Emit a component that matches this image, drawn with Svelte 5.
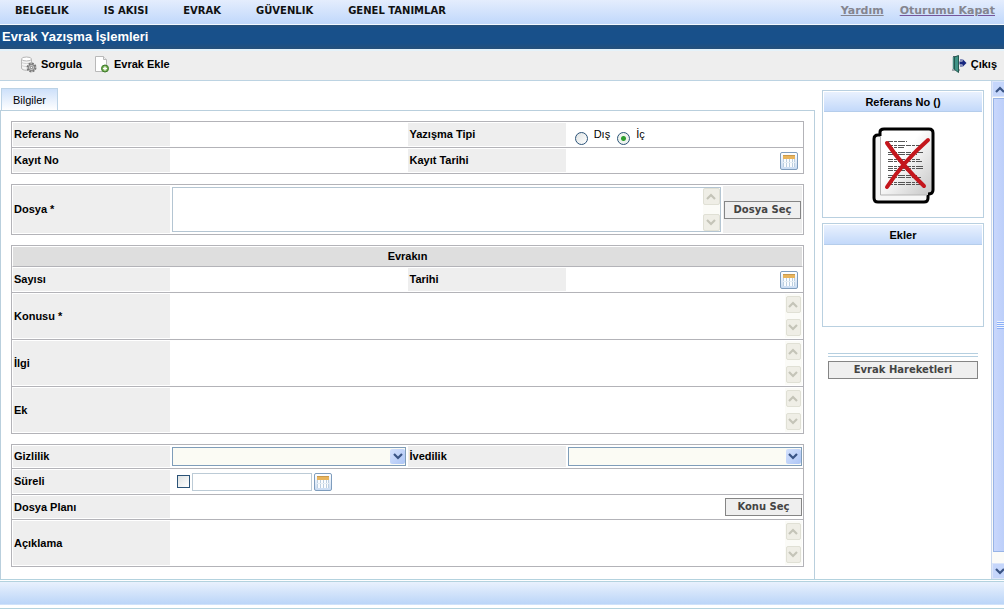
<script>
  const menu = ["BELGELIK", "IS AKISI", "EVRAK", "GÜVENLIK", "GENEL TANIMLAR"];

  let tip = $state("ic");
  let sureli = $state(false);
</script>

{#snippet chevron(up)}
  <svg class="chevron" viewBox="0 0 10 7" width="10" height="7">
    <path d={up ? "M1 6L5 2L9 6" : "M1 1L5 5L9 1"} fill="none" stroke="currentColor" stroke-width="2.2" />
  </svg>
{/snippet}

{#snippet calendar(name)}
  <button class="calendar" type="button" aria-label={name}>
    <svg viewBox="0 0 16 16" width="16" height="16">
      <rect x="2" y="2" width="12" height="12" fill="#fbfdff" />
      <path d="M2.5 6v8M5.5 6v8M8.5 6v8M11.5 6v8M13.5 6v8" stroke="#bccfe0" />
      <path d="M2 9.500h12" stroke="#e6eef4" />
      <rect x="2" y="2" width="12" height="4" fill="#e8b45c" />
      <path d="M2 2.5h12" stroke="#c99a4e" />
    </svg>
  </button>
{/snippet}

{#snippet area(id)}
  <textarea {id}></textarea>
  <div class="track">
    <span class="arrow">{@render chevron(true)}</span>
    <span class="arrow">{@render chevron(false)}</span>
  </div>
{/snippet}

{#snippet dropdown(id)}
  <div class="dropdown">
    <select {id}><option value=""></option></select>
    <span class="drop">{@render chevron(false)}</span>
  </div>
{/snippet}

<div class="page">
  <nav class="menu">
    {#each menu as item}
      <a href="#menu">{item}</a>
    {/each}
    <div class="account">
      <a href="#yardim">Yardım</a>
      <a class="visited" href="#kapat">Oturumu Kapat</a>
    </div>
  </nav>

  <h1>Evrak Yazışma İşlemleri</h1>

  <div class="toolbar">
    <button type="button">
      <svg viewBox="0 0 17 17" width="17" height="17">
        <path d="M1.5 3v9c0 3 10 3 10 0V3" fill="#f4f4f4" stroke="#b5b5b5" />
        <ellipse cx="6.5" cy="3" rx="5" ry="2" fill="#fff" stroke="#b5b5b5" />
        <path d="M1.5 6c1 2 9 2 10 0M1.5 9c1 2 9 2 10 0" fill="none" stroke="#cfcfcf" />
        <circle cx="11.5" cy="11.5" r="4" fill="#ccc" stroke="#777" stroke-width="2" stroke-dasharray="2 1.1" />
        <circle cx="11.5" cy="11.5" r="3" fill="#d8d8d8" stroke="#777" />
        <circle cx="11.5" cy="11.5" r="1.2" fill="#fff" stroke="#777" />
      </svg>
      Sorgula
    </button>
    <button type="button">
      <svg viewBox="0 0 17 17" width="17" height="17">
        <path d="M2.5 0.5h8l3 3v12h-11z" fill="#fff" stroke="#b9b9b9" />
        <path d="M10.5 0.5v3h3" fill="#eee" stroke="#b9b9b9" />
        <circle cx="12" cy="12.5" r="3.5" fill="#72ad4d" stroke="#3d7a2b" />
        <path d="M12 10.5v4M10 12.5h4" stroke="#fff" stroke-width="1.4" />
      </svg>
      Evrak Ekle
    </button>
    <button class="exit" type="button">
      <svg viewBox="0 0 16 18" width="16" height="18">
        <path d="M2 1.5h6M1 15h3M7.5 2v13H9" fill="none" stroke="#55616b" />
        <path d="M2.5 2v12" stroke="#4a8c83" stroke-width="1.5" />
        <path d="M3.5 2l4-1.5v17l-4-3z" fill="#3f9487" stroke="#25584f" />
        <path d="M9 5h2M9 11h2" stroke="#1b2b86" />
        <path d="M8.5 6.5h3V4l4 4-4 4V9.500h-3z" fill="#17277f" />
      </svg>
      Çıkış
    </button>
  </div>

  <main>
    <div class="content">
      <div class="tabs">
        <button type="button">Bilgiler</button>
      </div>

      <form>
        <section>
          <div class="row">
            <label for="referans">Referans No</label>
            <div class="field"><input id="referans" type="text" /></div>
            <span class="label" id="tip">Yazışma Tipi</span>
            <div class="field radios" role="radiogroup" aria-labelledby="tip">
              <input id="dis" type="radio" name="tip" value="dis" bind:group={tip} />
              <label for="dis">Dış</label>
              <input id="ic" type="radio" name="tip" value="ic" bind:group={tip} />
              <label for="ic">İç</label>
            </div>
          </div>
          <div class="row">
            <label for="kayit">Kayıt No</label>
            <div class="field"><input id="kayit" type="text" /></div>
            <label for="kayit-tarihi">Kayıt Tarihi</label>
            <div class="field date">
              <input id="kayit-tarihi" type="text" />
              {@render calendar("Kayıt Tarihi")}
            </div>
          </div>
        </section>

        <section>
          <div class="row file">
            <label for="dosya">Dosya *</label>
            <div class="field wide">
              <div class="boxed">{@render area("dosya")}</div>
              <div class="action"><button class="push" type="button">Dosya Seç</button></div>
            </div>
          </div>
        </section>

        <section>
          <h2>Evrakın</h2>
          <div class="row">
            <label for="sayisi">Sayısı</label>
            <div class="field"><input id="sayisi" type="text" /></div>
            <label for="tarihi">Tarihi</label>
            <div class="field date">
              <input id="tarihi" type="text" />
              {@render calendar("Tarihi")}
            </div>
          </div>
          <div class="row tall">
            <label for="konusu">Konusu *</label>
            <div class="field wide">{@render area("konusu")}</div>
          </div>
          <div class="row tall">
            <label for="ilgi">İlgi</label>
            <div class="field wide">{@render area("ilgi")}</div>
          </div>
          <div class="row tall">
            <label for="ek">Ek</label>
            <div class="field wide">{@render area("ek")}</div>
          </div>
        </section>

        <section>
          <div class="row short">
            <label for="gizlilik">Gizlilik</label>
            <div class="field">{@render dropdown("gizlilik")}</div>
            <label for="ivedilik">İvedilik</label>
            <div class="field">{@render dropdown("ivedilik")}</div>
          </div>
          <div class="row">
            <label for="sureli">Süreli</label>
            <div class="field wide term">
              <input id="sureli" type="checkbox" bind:checked={sureli} />
              <input class="day" type="text" aria-label="Süreli" />
              {@render calendar("Süreli")}
            </div>
          </div>
          <div class="row plan">
            <label for="plan">Dosya Planı</label>
            <div class="field wide">
              <input id="plan" type="text" />
              <button class="push" type="button">Konu Seç</button>
            </div>
          </div>
          <div class="row tall">
            <label for="aciklama">Açıklama</label>
            <div class="field wide">{@render area("aciklama")}</div>
          </div>
        </section>
      </form>
    </div>

    <aside>
      <div class="box">
        <h3>Referans No ()</h3>
        <div class="preview">
          <svg viewBox="0 0 64 78" width="64" height="78">
            <defs>
              <linearGradient id="sheet" x1="0" y1="0" x2="1" y2="1">
                <stop offset="0.4" stop-color="#fff" />
                <stop offset="1" stop-color="#c4c4c4" />
              </linearGradient>
            </defs>
            <path d="M8 8H6Q2 8 2 12v59q0 4 4 4h46q4 0 4-4v-4" fill="#f6f6f6" stroke="#000" stroke-width="3" />
            <path d="M11 2h46q4 0 4 4v58q0 4-4 4H8V6q0-4 3-4z" fill="url(#sheet)" />
            <path d="M8 9V5q0-3 4-3h45q4 0 4 4v57q0 4-5 4" fill="none" stroke="#000" stroke-width="3" />
            <path d="M8.5 9v59H55" fill="none" stroke="#b5b5b5" />
            <path
              d="M16 14.5h19M16 18.5h33M16 20.5h16M16 25.5h35M16 27.5h29M16 32.5h32M16 34.5h34M16 39.5h35M16 41.5h35M16 43.5h20M16 48.5h29M16 50.5h33M16 55.5h31M16 57.5h35"
              stroke="#555"
              stroke-dasharray="5 1 3 1 7 1"
            />
            <path d="M15 16q15 22 37 43M56 13Q32 34 15 60" fill="none" stroke="#c4161c" stroke-width="4" stroke-linecap="round" />
          </svg>
        </div>
      </div>
      <div class="box">
        <h3>Ekler</h3>
        <div class="attachments"></div>
      </div>
      <div class="moves">
        <button class="push" type="button">Evrak Hareketleri</button>
      </div>
    </aside>

    <div class="scroll">
      <span class="scroll-arrow">{@render chevron(true)}</span>
      <span class="thumb"><i></i></span>
      <span class="scroll-arrow">{@render chevron(false)}</span>
    </div>
  </main>

  <footer></footer>
</div>

<style>
  :global(body) {
    background: #fff;
    overflow: hidden;
  }

  .page {
    font: 11px/14px "Liberation Sans", Arial, sans-serif;
    color: #000;
  }

  .page :global(*) {
    box-sizing: border-box;
  }

  h1, h2, h3 {
    margin: 0;
  }

  svg {
    display: block;
    flex: none;
  }

  button, input, select, textarea {
    font: inherit;
    color: inherit;
    margin: 0;
    padding: 0;
    border: 0;
    border-radius: 0;
    background: none;
    outline: none;
  }

  .menu {
    display: flex;
    align-items: center;
    gap: 35px;
    height: 25px;
    padding: 0 9px 2px 15px;
    border-bottom: 1px solid #f4faff;
    background: linear-gradient(#e4edfd, #c0d8fb);
    font: bold 10px/14px Verdana, "DejaVu Sans", sans-serif;
  }

  .menu a {
    color: #111;
    text-decoration: none;
  }

  .account {
    display: flex;
    gap: 16px;
    margin-left: auto;
    font-size: 11px;
  }

  .account a {
    color: #85858f;
    text-decoration: underline;
  }

  .account .visited {
    text-decoration-color: #75559b;
  }

  h1 {
    height: 24px;
    padding-left: 2px;
    background: linear-gradient(#26507a, #18508a 15%, #18508a 75%, #26507a);
    color: #fff;
    font-size: 13px;
    line-height: 24px;
  }

  .toolbar {
    display: flex;
    align-items: center;
    gap: 11px;
    height: 32px;
    padding: 0 7px 3px 20px;
    border-top: 2px solid #e4f2fa;
    border-bottom: 1px solid #bcd3e2;
    background: #eee;
  }

  .toolbar button {
    display: flex;
    align-items: center;
    gap: 4px;
    font-weight: bold;
  }

  .toolbar .exit {
    margin-left: auto;
  }

  main {
    display: flex;
    border-bottom: 1px solid #b3d2de;
  }

  .content {
    flex: 1;
    display: flex;
    flex-direction: column;
    padding-top: 7px;
  }

  .tabs {
    padding-left: 1px;
  }

  .tabs button {
    display: block;
    height: 22px;
    padding: 0 11px;
    border: 1px solid #bcd3e6;
    border-bottom: 0;
    background: linear-gradient(#cde0fa, #fff);
  }

  form {
    flex: 1;
    display: flex;
    flex-direction: column;
    gap: 10px;
    padding: 10px 10px 12px;
    border: 1px solid #b9cfdd;
    border-bottom: 0;
  }

  section {
    border: 1px solid #b3b3b8;
    border-bottom: 0;
  }

  .row {
    display: grid;
    grid-template-columns: 20% 30% 20% 30%;
    height: 26px;
    border-bottom: 1px solid #b3b3b8;
  }

  .short {
    height: 24px;
  }

  .plan {
    height: 25px;
  }

  .tall {
    height: 47px;
  }

  .file {
    height: 50px;
  }

  .row > label, .label {
    display: flex;
    align-items: center;
    margin: 1px 0 1px 1px;
    padding: 0 0 1px 1px;
    background: #eee;
    font-weight: bold;
  }

  h2 {
    height: 21px;
    border: 1px solid #fff;
    border-bottom: 1px solid #b3b3b8;
    background: #dedede;
    font-size: 11px;
    line-height: 19px;
    text-align: center;
  }

  .field {
    display: flex;
    align-items: center;
    min-width: 0;
    padding: 1px 1px 1px 2px;
  }

  .field input[type="text"] {
    flex: 1;
    min-width: 0;
    height: 18px;
  }

  .wide {
    grid-column: span 3;
  }

  .field.date {
    padding-right: 5px;
  }

  .field.radios {
    padding-bottom: 2px;
    padding-left: 9px;
  }

  .radios label {
    padding: 0 7px 1px 6px;
  }

  input[type="radio"], input[type="checkbox"] {
    appearance: none;
    width: 13px;
    height: 13px;
    border: 1px solid #2b5378;
    background: linear-gradient(135deg, #dfe3e3, #fff);
  }

  input[type="radio"] {
    align-self: flex-end;
    border-radius: 50%;
  }

  input[type="radio"]:checked {
    background: radial-gradient(#2f9e2f 2px, #eef3ee 3px);
  }

  input[type="checkbox"]:checked {
    background: #2f9e2f;
  }

  .calendar {
    width: 18px;
    height: 18px;
    border: 1px solid #7f9dbd;
    border-radius: 2px;
    background: linear-gradient(#fff, #c9dcf3);
  }

  textarea {
    flex: 1;
    align-self: stretch;
    resize: none;
    overflow: hidden;
  }

  .track {
    display: flex;
    flex-direction: column;
    justify-content: space-between;
    align-self: stretch;
    width: 17px;
    padding: 2px 1px;
    background: #fbfbf7;
  }

  .arrow {
    display: grid;
    place-items: center;
    height: 17px;
    border: 1px solid #e0e0d5;
    border-radius: 2px;
    background: #efeee6;
    color: #c4c4b8;
  }

  .boxed {
    flex: 1;
    display: flex;
    align-self: stretch;
    margin: 1px 2px 1px 0;
    border: 1px solid #b4c5d2;
  }

  .boxed .track {
    padding: 0;
  }

  .action {
    display: flex;
    align-items: center;
    align-self: stretch;
    padding: 0 1px;
    background: #eee;
  }

  .push {
    width: 77px;
    height: 18px;
    border: 1px solid #858585;
    background: #efefef;
    color: #444;
    font: bold 10px/14px Verdana, "DejaVu Sans", sans-serif;
  }

  .dropdown {
    position: relative;
    flex: 1;
  }

  select {
    display: block;
    appearance: none;
    width: 100%;
    height: 19px;
    border: 1px solid #7f9db9;
    background: #fbfbf4;
  }

  .drop {
    position: absolute;
    top: 2px;
    right: 1px;
    display: grid;
    place-items: center;
    width: 15px;
    height: 15px;
    border-radius: 2px;
    background: linear-gradient(135deg, #d5e2fd, #adc5f5);
    color: #3a5485;
    pointer-events: none;
  }

  .field.term {
    gap: 2px;
    padding-left: 7px;
  }

  .field input.day {
    flex: none;
    width: 120px;
    border: 1px solid #bccbd6;
  }

  aside {
    display: flex;
    flex-direction: column;
    gap: 5px;
    width: 176px;
    padding: 9px 7px 0;
  }

  .box {
    padding: 1px;
    border: 1px solid #b9d0e0;
  }

  h3 {
    height: 20px;
    border-bottom: 1px solid #b5cdeb;
    background: linear-gradient(#e9f1fe, #c3d9fa);
    font-size: 11px;
    line-height: 20px;
    text-align: center;
  }

  .preview {
    display: grid;
    place-items: center;
    height: 104px;
    padding: 3px 0 0 2px;
  }

  .attachments {
    height: 80px;
  }

  .moves {
    margin: 21px 6px 0;
    padding-top: 4px;
    border-top: 4px double #b5cfe0;
  }

  .moves .push {
    width: 100%;
  }

  .scroll {
    display: flex;
    flex-direction: column;
    width: 13px;
    border-left: 1px solid #c9d8ee;
    background: #fbfbf8;
    overflow: hidden;
  }

  .scroll-arrow {
    display: grid;
    place-items: center;
    width: 15px;
    height: 16px;
    border: 1px solid #dbe5fa;
    background: #c5d6fb;
    color: #3a5485;
  }

  .thumb {
    flex: 1;
    display: grid;
    place-items: center end;
    margin: 1px 0 11px 1px;
    border: 1px solid #98b4e6;
    border-right: 0;
    background: linear-gradient(90deg, #c9d7fc, #bccffa);
  }

  .thumb i {
    width: 7px;
    height: 8px;
    background: repeating-linear-gradient(#eef4fe 0 1px, #8cb0f8 1px 2px);
  }

  footer {
    height: 28px;
    margin-top: 1px;
    border-top: 1px solid #b3d2de;
    border-bottom: 1px solid #b3d2de;
    background: linear-gradient(#e9f1fd, #bbd5f8 85%, #fff 90%);
  }
</style>
